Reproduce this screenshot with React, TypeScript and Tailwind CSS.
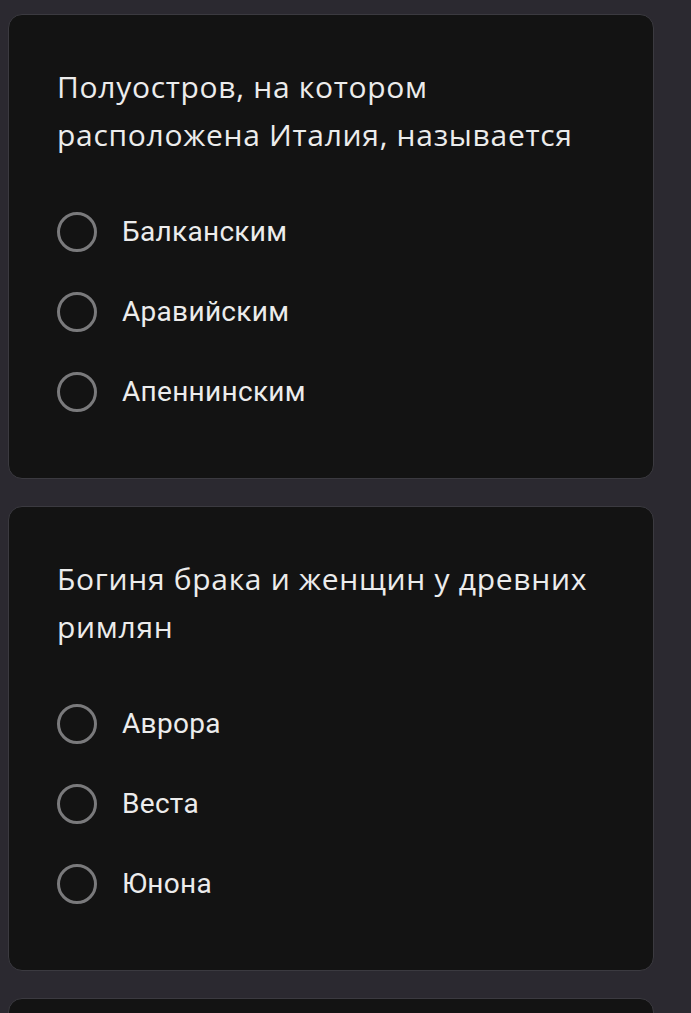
import React from 'react';

type Question = {
  title: string;
  options: string[];
};

const questions: Question[] = [
  {
    title: 'Полуостров, на котором расположена Италия, называется',
    options: ['Балканским', 'Аравийским', 'Апеннинским'],
  },
  {
    title: 'Богиня брака и женщин у древних римлян',
    options: ['Аврора', 'Веста', 'Юнона'],
  },
];

const Radio: React.FC = () => (
  <span className="block h-[40px] w-[40px] shrink-0 rounded-full border-[3px] border-[#7a7a7c]" />
);

const QuestionCard: React.FC<{ q: Question }> = ({ q }) => (
  <div className="h-[465px] w-[646px] shrink-0 rounded-[14px] border border-[#3b3a40] bg-[#131313] pl-[48px] pr-[30px] pt-[48px]">
    <h2 className="max-w-[540px] text-[30px] leading-[48px] text-[#ececec] font-['Open_Sans','Noto_Sans',sans-serif] tracking-[0.7px]">
      {q.title}
    </h2>
    <ul className="mt-[33px] flex flex-col">
      {q.options.map((opt) => (
        <li key={opt} className="flex h-[80px] items-center gap-[25px]">
          <Radio />
          <span className="text-[28px] text-[#ececec] font-['Roboto',sans-serif] tracking-[0.3px]">{opt}</span>
        </li>
      ))}
    </ul>
  </div>
);

const App: React.FC = () => {
  return (
    <div className="min-h-screen h-[1013px] overflow-hidden bg-[#2b2930] pl-[8px] pt-[14px]">
      <div className="flex flex-col gap-[27px]">
        {questions.map((q) => (
          <QuestionCard key={q.title} q={q} />
        ))}
        <div className="h-[100px] w-[646px] shrink-0 rounded-[14px] border border-[#3b3a40] bg-[#131313]" />
      </div>
    </div>
  );
};

export default App;
